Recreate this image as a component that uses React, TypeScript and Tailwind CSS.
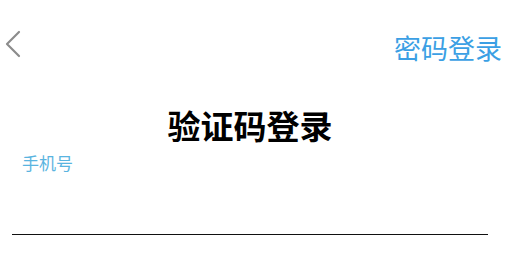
export default function App() {
  return (
    <div
      className="h-[255px] w-[510px] overflow-hidden bg-white"
      style={{ fontFamily: '"Noto Sans CJK SC", "Noto Sans", sans-serif' }}
    >
      <div className="flex items-start justify-between pl-[5px] pr-[8px] pt-[30px]">
        <button type="button" className="flex h-[28px] w-[16px] items-center">
          <svg width="16" height="28" viewBox="0 0 16 28" fill="none">
            <path d="M14 2 L2 14 L14 26" stroke="#8c8c8c" strokeWidth="2.2" strokeLinecap="round" strokeLinejoin="round" />
          </svg>
        </button>
        <span className="mt-[4px] text-[27px] leading-none text-[#3b9fe4]">密码登录</span>
      </div>
      <div className="pl-[12px] pr-[22px]">
        <h1 className="mt-[48px] text-center text-[33px] font-bold leading-none text-black">验证码登录</h1>
        <div className="mt-[12px] pl-[10px] text-[17px] leading-none text-[#5ab4e0]">手机号</div>
        <div className="mt-[63px] h-[1px] bg-[#111]" />
      </div>
    </div>
  );
}
